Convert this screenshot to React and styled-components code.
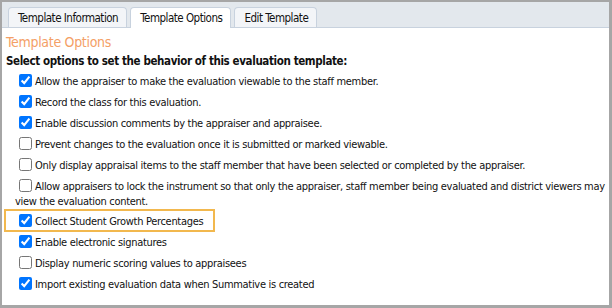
import styled, { createGlobalStyle } from 'styled-components';

const Global = createGlobalStyle`
    html, body {
        margin: 0;
        padding: 0;
        background: #fff;
    }
    body {
        font-family: "DejaVu Sans", sans-serif;
        font-stretch: condensed;
        color: #111;
    }
`

const Frame = styled.div`
    width: 612px;
    height: 308px;
    box-sizing: border-box;
    border-style: solid;
    border-color: #a6a6a6;
    border-width: 2px 3px 3px 2px;
    overflow: hidden;
`

const TabBar = styled.div`
    display: flex;
    align-items: flex-end;
    gap: 3px;
    height: 25px;
    padding-left: 6px;
    background: #e3e8ed;
    border-bottom: 1px solid #c8d2de;
`

const Tab = styled.div`
    height: ${p => (p.$active ? 21 : 20)}px;
    margin-bottom: ${p => (p.$active ? -1 : 0)}px;
    padding: 0 8px 0 9px;
    box-sizing: border-box;
    display: flex;
    align-items: center;
    border: 1px solid #c8d2de;
    border-bottom: none;
    border-radius: 4px 4px 0 0;
    background: ${p => (p.$active ? '#fff' : '#f3f5f8')};
    font-size: 11.5px;
    letter-spacing: -0.5px;
    color: #111;
`

const Content = styled.div`
    padding: 4px 0 0 4px;
`

const Title = styled.div`
    color: #f4a066;
    font-size: 14px;
    letter-spacing: -0.3px;
    line-height: 20px;
`

const Lead = styled.div`
    font-weight: bold;
    font-size: 11.5px;
    letter-spacing: -0.38px;
    line-height: 16px;
    margin-top: 1px;
    margin-bottom: 5px;
`

const Option = styled.label`
    display: block;
    width: ${p => (p.$highlight ? 'fit-content' : 'auto')};
    margin: ${p => (p.$highlight ? '-6px 0 3px -2px' : '0 0 6px 9px')};
    padding: ${p => (p.$highlight ? '3px 10px 1px 9px' : '0')};
    border: ${p => (p.$highlight ? '2px solid #f2b84e' : 'none')};
    font-size: 11px;
    letter-spacing: -0.31px;
    line-height: 15px;
`

const Box = styled.input.attrs({ type: 'checkbox' })`
    width: 13px;
    height: 13px;
    margin: 0 3px 0 4px;
    vertical-align: -2px;
    accent-color: #0075ff;
`

const options = [
    { text: 'Allow the appraiser to make the evaluation viewable to the staff member.', on: true },
    { text: 'Record the class for this evaluation.', on: true },
    { text: 'Enable discussion comments by the appraiser and appraisee.', on: true },
    { text: 'Prevent changes to the evaluation once it is submitted or marked viewable.', on: false },
    { text: 'Only display appraisal items to the staff member that have been selected or completed by the appraiser.', on: false },
    { text: 'Allow appraisers to lock the instrument so that only the appraiser, staff member being evaluated and district viewers may view the evaluation content.', on: false },
    { text: 'Collect Student Growth Percentages', on: true, highlight: true },
    { text: 'Enable electronic signatures', on: true },
    { text: 'Display numeric scoring values to appraisees', on: false },
    { text: 'Import existing evaluation data when Summative is created', on: true },
]

const App = () => (
    <Frame>
        <Global />
        <TabBar>
            <Tab>Template Information</Tab>
            <Tab $active>Template Options</Tab>
            <Tab>Edit Template</Tab>
        </TabBar>
        <Content>
            <Title>Template Options</Title>
            <Lead>Select options to set the behavior of this evaluation template:</Lead>
            {options.map(o => (
                <Option key={o.text} $highlight={o.highlight}>
                    <Box defaultChecked={o.on} />
                    {o.text}
                </Option>
            ))}
        </Content>
    </Frame>
)

export default App;
